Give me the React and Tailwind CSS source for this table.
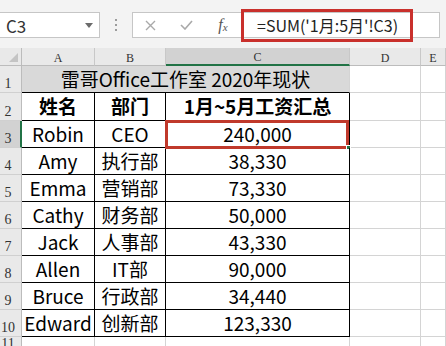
import React from 'react';

const rows = [
    ['Robin', 'CEO', '240,000'],
    ['Amy', '执行部', '38,330'],
    ['Emma', '营销部', '73,330'],
    ['Cathy', '财务部', '50,000'],
    ['Jack', '人事部', '43,330'],
    ['Allen', 'IT部', '90,000'],
    ['Bruce', '行政部', '34,440'],
    ['Edward', '创新部', '123,330'],
];

const cellFont = "font-['Noto_Sans_CJK_SC','Noto_Sans',sans-serif] text-[19px] text-black";
const headFont = "font-['Liberation_Serif',serif] text-[#333]";

const RowHead = ({ n, active }) => (
    <div
        className={`flex items-end pb-[1px] border-b border-[#d0d0d0] ${
            active ? 'bg-[#d2d2d2] border-r-2 border-r-[#217346]' : 'bg-[#e9e9e9] border-r border-r-[#bcbcbc]'
        }`}
    >
        <span className={`w-[16px] text-center text-[14px] leading-none ${headFont}`}>{n}</span>
    </div>
);

const ColHead = ({ label, active }) => (
    <div
        className={`flex items-end justify-center pb-[1px] border-r border-[#c8c8c8] ${
            active ? 'bg-[#d2d2d2] border-b-2 border-b-[#217346]' : 'bg-[#e9e9e9] border-b border-b-[#bcbcbc]'
        }`}
    >
        <span className={`text-[12px] leading-none ${headFont}`}>{label}</span>
    </div>
);

const Cell = ({ children, bold, extra = '' }) => (
    <div
        className={`flex items-center justify-center border-r border-b border-black whitespace-nowrap ${cellFont} ${
            bold ? 'font-bold' : ''
        } ${extra}`}
    >
        {children}
    </div>
);

const Blank = ({ last }) => (
    <div className={`border-r border-[#d4d4d4] ${last ? '' : 'border-b'} bg-white`} />
);

const App = () => {
    return (
        <div className="w-[446px] h-[346px] overflow-hidden bg-white">
            {/* formula bar */}
            <div className="relative h-[48px] bg-[#f3f3f3] flex items-start pt-[12px]">
                <div className="w-[100px] h-[26px] bg-white border border-l-0 border-[#c6c6c6] flex items-center justify-between pl-[6px] pr-[6px]">
                    <span className="font-['Noto_Sans_CJK_SC','Noto_Sans',sans-serif] text-[17px] text-[#333] leading-none">C3</span>
                    <svg width="8" height="5" viewBox="0 0 8 5">
                        <path d="M0 0h8L4 5z" fill="#6b6b6b" />
                    </svg>
                </div>
                <div className="w-[32px] h-[26px] flex flex-col items-center justify-center gap-[3px]">
                    <span className="w-[2px] h-[2px] bg-[#9c9c9c]" />
                    <span className="w-[2px] h-[2px] bg-[#9c9c9c]" />
                    <span className="w-[2px] h-[2px] bg-[#9c9c9c]" />
                </div>
                <div className="w-[308px] h-[26px] bg-white border border-[#c6c6c6] flex items-center">
                    <span className="w-[35px] flex justify-center">
                        <svg width="11" height="11" viewBox="0 0 11 11">
                            <path d="M1 1l9 9M10 1l-9 9" stroke="#a9a9a9" strokeWidth="1.4" />
                        </svg>
                    </span>
                    <span className="w-[37px] flex justify-center">
                        <svg width="13" height="10" viewBox="0 0 13 10">
                            <path d="M1 5l4 4 7-8" stroke="#a9a9a9" strokeWidth="1.6" fill="none" />
                        </svg>
                    </span>
                    <span className="w-[36px] flex justify-center font-['Liberation_Serif',serif] italic text-[#555] leading-none">
                        <span className="text-[16px]">f</span>
                        <span className="text-[11px] mt-[5px]">x</span>
                    </span>
                    <span className="ml-[16px] font-['Noto_Sans_CJK_SC','Noto_Sans',sans-serif] text-[16px] text-[#222] leading-none whitespace-nowrap">
                        =SUM('1月:5月'!C3)
                    </span>
                </div>
                <div className="absolute left-[241px] top-[9px] w-[172px] h-[33px] border-[3px] border-[#c9302c]" />
            </div>

            {/* sheet */}
            <div className="grid grid-cols-[22px_73px_71px_184px_71px_1fr] grid-rows-[18px_27px_28px_repeat(8,27px)_1fr] h-[298px]">
                <div className="relative bg-[#e9e9e9] border-r border-b border-[#bcbcbc]">
                    <svg className="absolute right-[3px] bottom-[3px]" width="9" height="9" viewBox="0 0 9 9">
                        <path d="M9 0v9H0z" fill="#c4c4c4" />
                    </svg>
                </div>
                <ColHead label="A" />
                <ColHead label="B" />
                <ColHead label="C" active />
                <ColHead label="D" />
                <ColHead label="E" />

                <RowHead n="1" />
                <div
                    className={`col-span-3 flex items-center justify-center bg-[#d9d9d9] border-b border-black border-r border-r-[#d4d4d4] whitespace-nowrap ${cellFont}`}
                >
                    雷哥Office工作室 2020年现状
                </div>
                <Blank />
                <Blank />

                <RowHead n="2" />
                <Cell bold>姓名</Cell>
                <Cell bold>部门</Cell>
                <Cell bold>1月~5月工资汇总</Cell>
                <Blank />
                <Blank />

                {rows.map((r, i) => (
                    <React.Fragment key={r[0]}>
                        <RowHead n={String(i + 3)} active={i === 0} />
                        <Cell>{r[0]}</Cell>
                        <Cell>{r[1]}</Cell>
                        <Cell extra="relative">
                            {r[2]}
                            {i === 0 && (
                                <>
                                    <div className="absolute -left-px -top-px right-0 -bottom-[2px] border-[3px] border-[#c0392b]" />
                                    <div className="absolute -right-[2px] -bottom-[3px] w-[5px] h-[5px] bg-[#217346] border border-white" />
                                </>
                            )}
                        </Cell>
                        <Blank />
                        <Blank />
                    </React.Fragment>
                ))}

                <RowHead n="11" />
                <Blank last />
                <Blank last />
                <Blank last />
                <Blank last />
                <Blank last />
            </div>
        </div>
    );
};

export default App;
